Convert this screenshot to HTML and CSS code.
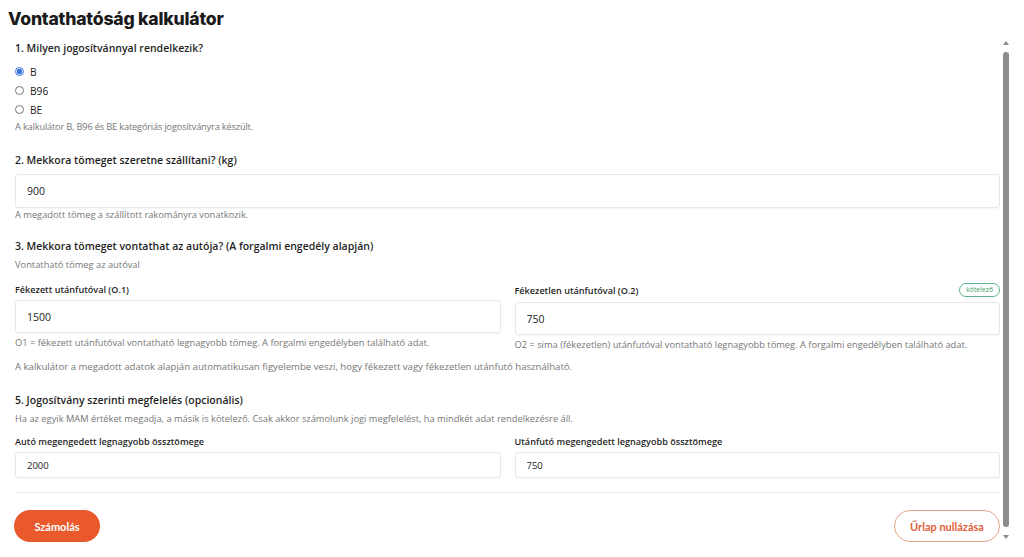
FILE: index.html
```html
<!DOCTYPE html>
<html lang="hu">
<head>
    <meta charset="UTF-8">
    <meta name="viewport" content="width=device-width, initial-scale=1.0">
    <title>Vontathatóság kalkulátor</title>
    <link rel="stylesheet" href="styles.css">
</head>
<body>
    <h1 class="title">Vontathatóság kalkulátor</h1>
    <div class="frame">
        <div class="scroller">
            <form class="calc" id="calcForm">
                <section class="block block-first">
                    <h2>1. Milyen jogosítvánnyal rendelkezik?</h2>
                    <div class="radios">
                        <label class="radio"><input type="radio" name="license" value="B" checked> B</label>
                        <label class="radio"><input type="radio" name="license" value="B96"> B96</label>
                        <label class="radio"><input type="radio" name="license" value="BE"> BE</label>
                    </div>
                    <p class="tiny">A kalkulátor B, B96 és BE kategóriás jogosítványra készült.</p>
                </section>

                <section class="block block-second">
                    <h2>2. Mekkora tömeget szeretne szállítani? (kg)</h2>
                    <input class="field field-lg" type="text" value="900">
                    <p class="help">A megadott tömeg a szállított rakományra vonatkozik.</p>
                </section>

                <section class="block">
                    <h2>3. Mekkora tömeget vontathat az autója? (A forgalmi engedély alapján)</h2>
                    <p class="sub">Vontatható tömeg az autóval</p>
                    <div class="cols">
                        <div class="col">
                            <div class="col-head">
                                <label>Fékezett utánfutóval (O.1)</label>
                            </div>
                            <input class="field field-md" type="text" value="1500">
                            <p class="help">O1 = fékezett utánfutóval vontatható legnagyobb tömeg. A forgalmi engedélyben található adat.</p>
                        </div>
                        <div class="col">
                            <div class="col-head col-head-badge">
                                <label>Fékezetlen utánfutóval (O.2)</label>
                                <span class="badge">kötelező</span>
                            </div>
                            <input class="field field-md" type="text" value="750">
                            <p class="help">O2 = sima (fékezetlen) utánfutóval vontatható legnagyobb tömeg. A forgalmi engedélyben található adat.</p>
                        </div>
                    </div>
                    <p class="help help-note">A kalkulátor a megadott adatok alapján automatikusan figyelembe veszi, hogy fékezett vagy fékezetlen utánfutó használható.</p>
                </section>

                <section class="block block-last">
                    <h2>5. Jogosítvány szerinti megfelelés (opcionális)</h2>
                    <p class="sub">Ha az egyik MAM értéket megadja, a másik is kötelező. Csak akkor számolunk jogi megfelelést, ha mindkét adat rendelkezésre áll.</p>
                    <div class="cols">
                        <div class="col">
                            <div class="col-head"><label>Autó megengedett legnagyobb össztömege</label></div>
                            <input class="field field-sm" type="text" value="2000">
                        </div>
                        <div class="col">
                            <div class="col-head"><label>Utánfutó megengedett legnagyobb össztömege</label></div>
                            <input class="field field-sm" type="text" value="750">
                        </div>
                    </div>
                </section>

                <div class="actions">
                    <button type="button" class="btn btn-primary">Számolás</button>
                    <button type="reset" class="btn btn-outline">Űrlap nullázása</button>
                </div>
            </form>
        </div>
        <div class="scrollbar">
            <span class="arrow arrow-up"></span>
            <span class="thumb"></span>
            <span class="arrow arrow-down"></span>
        </div>
    </div>
</body>
</html>
```

FILE: styles.css
```css
/* Basic Reset */
* {
    margin: 0;
    padding: 0;
    box-sizing: border-box;
}
body {
    font-family: 'Open Sans', 'Noto Sans', sans-serif;
    background: #ffffff;
    color: #1f1f1f;
    height: 557px;
    overflow: hidden;
}
.title {
    font-family: 'Inter', sans-serif;
    font-size: 17.6px;
    font-weight: 800;
    line-height: 20px;
    letter-spacing: -0.2px;
    color: #1b1b1b;
    padding: 9px 8px 0;
}
.frame {
    display: flex;
    align-items: flex-start;
    width: 1010px;
    height: 519px;
    margin-top: 9px;
}
.scroller {
    flex: 1;
    height: 100%;
    overflow: hidden;
    padding-left: 15px;
}
/* drawn scrollbar, the screenshot shows the container scrolled to the top */
.scrollbar {
    width: 8px;
    height: 498px;
    margin: 3px 0 0 2px;
    display: flex;
    flex-direction: column;
    align-items: center;
}
.arrow {
    width: 0;
    height: 0;
    border-left: 3px solid transparent;
    border-right: 3px solid transparent;
}
.arrow-up {
    border-bottom: 4px solid #8b8b8b;
}
.arrow-down {
    border-top: 4px solid #8b8b8b;
}
.thumb {
    flex: 1;
    width: 6px;
    margin: 7px 0 8px;
    border-radius: 3px;
    background: #8b8b8b;
}
.calc {
    padding-bottom: 22px;
}
h2 {
    font-size: 10.5px;
    font-weight: 600;
    line-height: 14px;
    color: #1f1f1f;
}
.block {
    margin-top: 18px;
}
.block-first {
    margin-top: 3px;
}
.block-second {
    margin-top: 21px;
}
.radios {
    margin-top: 7px;
}
.radio {
    display: flex;
    align-items: center;
    height: 19px;
    font-size: 10.2px;
    color: #222;
}
.radio input {
    width: 9px;
    height: 9px;
    margin: 0 6px 0 0;
    accent-color: #3b73d9;
}
.tiny {
    font-size: 9.3px;
    line-height: 11px;
    margin-top: 2px;
    color: #777;
    letter-spacing: -0.2px;
}
.field {
    display: block;
    width: 100%;
    border: 1px solid #e8e8e8;
    border-radius: 3px;
    background: #fff;
    box-shadow: 0 1px 2px rgba(0, 0, 0, 0.04);
    font-family: 'Open Sans', sans-serif;
    color: #222;
    outline: none;
    padding: 0 11px;
}
.field-lg {
    height: 34px;
    margin-top: 7px;
    font-size: 10.5px;
}
.field-md {
    height: 33px;
    font-size: 10.5px;
}
.field-sm {
    height: 26px;
    font-size: 9.5px;
}
.help {
    font-size: 9.3px;
    line-height: 12px;
    margin-top: 1px;
    color: #777;
}
.sub {
    font-size: 9.3px;
    line-height: 12px;
    margin-top: 6px;
    color: #777;
}
.cols {
    display: grid;
    grid-template-columns: 1fr 1fr;
    column-gap: 14px;
    margin-top: 11px;
}
.col .help {
    margin-top: 4px;
}
.col-head {
    display: flex;
    align-items: center;
    justify-content: space-between;
    height: 14px;
    margin-bottom: 4px;
}
.col-head-badge {
    height: 16px;
}
.col-head label {
    font-size: 9.1px;
    font-weight: 600;
    color: #1f1f1f;
}
.badge {
    font-size: 6.8px;
    line-height: 12px;
    padding: 0 6px;
    border: 1px solid #5cb58a;
    border-radius: 8px;
    color: #3f9c6e;
}
.help-note {
    margin-top: 10px;
    font-size: 9.6px;
}
.block-last {
    margin-top: 20px;
}
.block-last .cols {
    margin-top: 9px;
}
.actions {
    display: flex;
    justify-content: space-between;
    align-items: center;
    margin-top: 14px;
    padding-top: 17px;
    border-top: 1px solid #ececec;
}
.btn {
    font-family: 'Lato', sans-serif;
    font-size: 11px;
    font-weight: 700;
    height: 32px;
    border-radius: 16px;
    cursor: pointer;
}
.btn-primary {
    width: 86px;
    margin-left: -1px;
    color: #fff;
    background: #e9592b;
    border: none;
}
.btn-outline {
    width: 106px;
    color: #e0613a;
    background: #fff;
    border: 1px solid #e8a58c;
}
```
